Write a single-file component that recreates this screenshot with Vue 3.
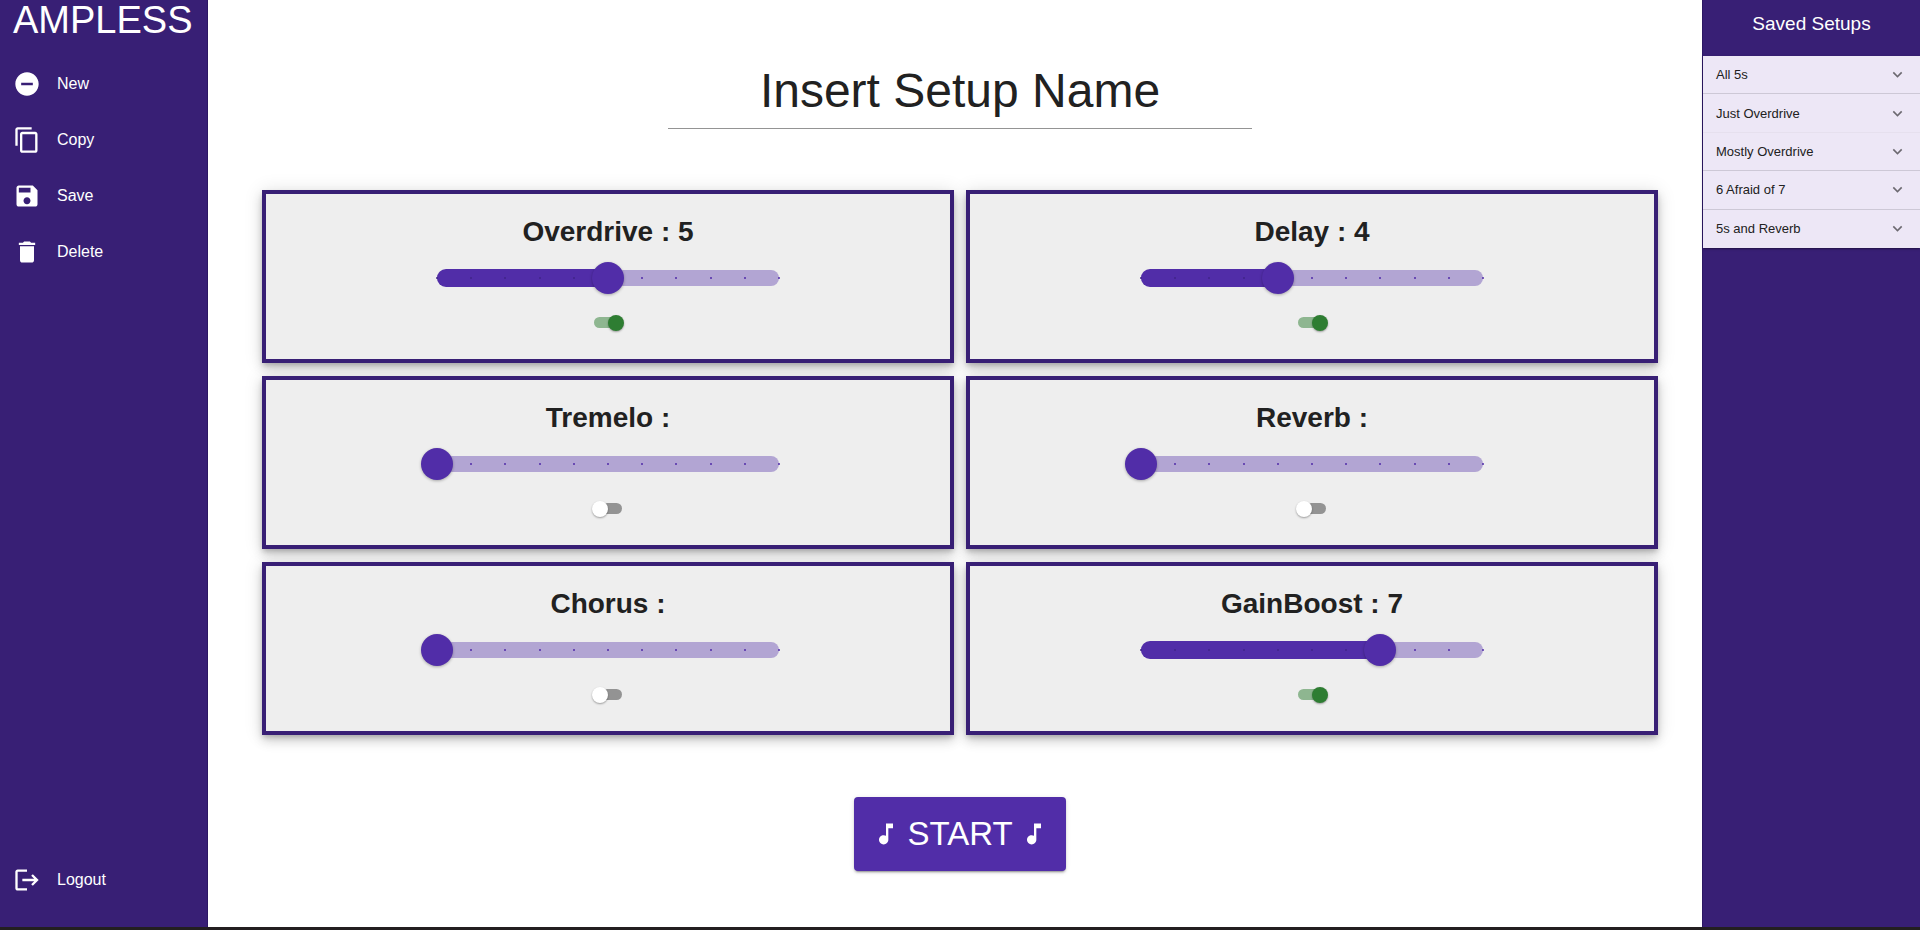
<script setup>
import { reactive, ref } from 'vue'

const setupName = ref('Insert Setup Name')

const actions = [
  { name: 'New', path: 'M12 2C6.48 2 2 6.48 2 12s4.48 10 10 10 10-4.48 10-10S17.52 2 12 2zm5 11H7v-2h10v2z' },
  { name: 'Copy', path: 'M16 1H4c-1.1 0-2 .9-2 2v14h2V3h12V1zm3 4H8c-1.1 0-2 .9-2 2v14c0 1.1.9 2 2 2h11c1.1 0 2-.9 2-2V7c0-1.1-.9-2-2-2zm0 16H8V7h11v14z' },
  { name: 'Save', path: 'M17 3H5c-1.11 0-2 .9-2 2v14c0 1.1.89 2 2 2h14c1.1 0 2-.9 2-2V7l-4-4zm-5 16c-1.66 0-3-1.34-3-3s1.34-3 3-3 3 1.34 3 3-1.34 3-3 3zm3-10H5V5h10v4z' },
  { name: 'Delete', path: 'M6 19c0 1.1.9 2 2 2h8c1.1 0 2-.9 2-2V7H6v12zM19 4h-3.5l-1-1h-5l-1 1H5v2h14V4z' },
]
const logoutPath = 'm17 7-1.41 1.41L18.17 11H8v2h10.17l-2.58 2.58L17 17l5-5zM4 5h8V3H4c-1.1 0-2 .9-2 2v14c0 1.1.9 2 2 2h8v-2H4V5z'
const notePath = 'M12 3v10.55c-.59-.34-1.27-.55-2-.55-2.21 0-4 1.79-4 4s1.79 4 4 4 4-1.79 4-4V7h4V3h-6z'

const effects = reactive([
  { name: 'Overdrive', value: 5, on: true },
  { name: 'Delay', value: 4, on: true },
  { name: 'Tremelo', value: 0, on: false },
  { name: 'Reverb', value: 0, on: false },
  { name: 'Chorus', value: 0, on: false },
  { name: 'GainBoost', value: 7, on: true },
])
const ticks = Array.from({ length: 11 }, (_, i) => i)

const savedSetups = ['All 5s', 'Just Overdrive', 'Mostly Overdrive', '6 Afraid of 7', '5s and Reverb']
</script>

<template>
  <div class="app">
    <nav class="sidebar">
      <h1 class="brand">AMPLESS</h1>
      <button v-for="action in actions" :key="action.name" type="button" class="nav-item">
        <svg class="icon" viewBox="0 0 24 24" aria-hidden="true"><path :d="action.path" /></svg>
        <span>{{ action.name }}</span>
      </button>
      <button type="button" class="nav-item logout">
        <svg class="icon" viewBox="0 0 24 24" aria-hidden="true"><path :d="logoutPath" /></svg>
        <span>Logout</span>
      </button>
    </nav>

    <main class="main">
      <input v-model="setupName" class="setup-name" type="text" aria-label="Setup name" />

      <div class="effects">
        <section v-for="effect in effects" :key="effect.name" class="card">
          <h2 class="card-title">
            <label :for="effect.name">{{ effect.name }} : {{ effect.value || '' }}</label>
          </h2>
          <div class="slider">
            <span class="rail"></span>
            <span v-if="effect.value" class="track" :style="{ width: effect.value * 10 + '%' }"></span>
            <span
              v-for="t in ticks"
              :key="t"
              class="tick"
              :class="{ active: t <= effect.value }"
              :style="{ left: t * 10 + '%' }"
            ></span>
            <input :id="effect.name" v-model.number="effect.value" class="range" type="range" min="0" max="10" />
          </div>
          <input v-model="effect.on" class="switch" type="checkbox" role="switch" :aria-label="effect.name + ' on'" />
        </section>
      </div>

      <button type="button" class="start">
        <svg class="icon" viewBox="0 0 24 24" aria-hidden="true"><path :d="notePath" /></svg>
        <span>START</span>
        <svg class="icon" viewBox="0 0 24 24" aria-hidden="true"><path :d="notePath" /></svg>
      </button>
    </main>

    <aside class="saved">
      <h2 class="saved-title">Saved Setups</h2>
      <div class="saved-list">
        <button v-for="setup in savedSetups" :key="setup" type="button" class="saved-item" aria-expanded="false">
          <span>{{ setup }}</span>
          <svg class="chevron" viewBox="0 0 24 24" aria-hidden="true">
            <path d="M16.59 8.59 12 13.17 7.41 8.59 6 10l6 6 6-6z" />
          </svg>
        </button>
      </div>
    </aside>
  </div>
</template>

<style>
body {
  margin: 0;
  background: #fff;
}
</style>

<style scoped>
* {
  box-sizing: border-box;
}

.app {
  display: grid;
  grid-template-columns: 208px minmax(0, 1fr) 218px;
  min-height: 100vh;
  border-bottom: 3px solid #231f20;
  color: #212121;
  font-family: "Liberation Sans", Arial, sans-serif;
}

h1,
h2 {
  margin: 0;
}

button {
  border: 0;
  background: none;
  color: inherit;
  font-family: inherit;
  cursor: pointer;
}

.icon {
  flex: none;
  width: 28px;
  height: 28px;
  fill: currentColor;
}

.sidebar {
  display: flex;
  flex-direction: column;
  padding-bottom: 19px;
  border-right: 1px solid #2c1763;
  background: #381f75;
  color: #fff;
}

.brand {
  margin-bottom: 16px;
  padding-left: 13px;
  font-size: 38px;
  font-weight: 400;
  line-height: 40px;
}

.nav-item {
  display: flex;
  align-items: center;
  gap: 16px;
  height: 56px;
  padding: 0 13px;
  font-size: 16px;
  text-align: left;
}

.logout {
  margin-top: auto;
}

.main {
  display: flex;
  flex-direction: column;
  align-items: center;
  padding: 52px 44px 0 54px;
}

.setup-name {
  width: 584px;
  max-width: 100%;
  height: 77px;
  padding: 0;
  border: 0;
  border-bottom: 1px solid #949494;
  outline: 0;
  background: none;
  color: inherit;
  font-family: inherit;
  font-size: 48px;
  text-align: center;
}

.effects {
  display: grid;
  grid-template-columns: repeat(2, minmax(0, 1fr));
  gap: 13px 12px;
  width: 100%;
  margin: 61px 0 62px;
}

.card {
  display: flex;
  flex-direction: column;
  align-items: center;
  padding: 22px 0 28px;
  border: 4px solid #381f75;
  background: #eee;
  box-shadow: 0 3px 5px -1px rgba(0, 0, 0, 0.2), 0 6px 10px 0 rgba(0, 0, 0, 0.14), 0 1px 18px 0 rgba(0, 0, 0, 0.12);
}

.card-title {
  font-size: 28px;
  font-weight: 700;
  line-height: 32px;
}

.slider {
  position: relative;
  width: 50%;
  height: 32px;
  margin: 14px 0 21px;
}

.rail,
.track {
  position: absolute;
  left: 0;
  border-radius: 9px;
}

.rail {
  top: 8px;
  width: 100%;
  height: 16px;
  background: #b2a5d3;
}

.track {
  top: 7px;
  height: 18px;
  background: #512da8;
}

.tick {
  position: absolute;
  top: 15px;
  width: 2px;
  height: 2px;
  margin-left: -1px;
  border-radius: 1px;
  background: #512da8;
}

.tick.active {
  background: #41248a;
}

.range {
  position: absolute;
  top: 0;
  left: -16px;
  width: calc(100% + 32px);
  height: 32px;
  margin: 0;
  appearance: none;
  background: none;
  cursor: pointer;
}

.range::-webkit-slider-thumb {
  width: 32px;
  height: 32px;
  appearance: none;
  border-radius: 50%;
  background: #512da8;
  box-shadow: 0 1px 3px rgba(0, 0, 0, 0.3);
}

.switch {
  position: relative;
  width: 32px;
  height: 16px;
  margin: 0;
  appearance: none;
  cursor: pointer;
}

.switch::before {
  content: "";
  position: absolute;
  inset: 2px 2px 3px;
  border-radius: 7px;
  background: #939393;
}

.switch::after {
  content: "";
  position: absolute;
  top: 0;
  left: 0;
  width: 16px;
  height: 16px;
  border-radius: 50%;
  background: #fff;
  box-shadow: 0 1px 2px rgba(0, 0, 0, 0.35);
}

.switch:checked::before {
  background: #8eb690;
}

.switch:checked::after {
  left: 16px;
  background: #2e7d32;
}

.start {
  display: flex;
  align-items: center;
  gap: 7px;
  height: 74px;
  padding: 0 18px;
  border-radius: 4px;
  background: #512da8;
  box-shadow: 0 3px 1px -2px rgba(0, 0, 0, 0.2), 0 2px 2px 0 rgba(0, 0, 0, 0.14), 0 1px 5px 0 rgba(0, 0, 0, 0.12);
  color: #fff;
  font-size: 33px;
}

.saved {
  border-left: 1px solid #2c1763;
  background: #381f75;
}

.saved-title {
  padding: 12px 0 20px;
  color: #fff;
  font-size: 19px;
  font-weight: 400;
  line-height: 24px;
  text-align: center;
}

.saved-list {
  display: grid;
  grid-auto-rows: 1fr;
  min-height: 192px;
  background: #ede7f6;
  box-shadow: 0 2px 1px -1px rgba(0, 0, 0, 0.2), 0 1px 3px 0 rgba(0, 0, 0, 0.2);
}

.saved-item {
  display: flex;
  align-items: center;
  justify-content: space-between;
  padding: 0 13px;
  border-bottom: 1px solid #cdc8d6;
  font-size: 13px;
  text-align: left;
}

.saved-item:nth-child(2) {
  border-bottom-color: #e6e0ee;
}

.saved-item:last-child {
  border-bottom-color: transparent;
}

.chevron {
  width: 19px;
  height: 19px;
  fill: #6c6970;
}
</style>
